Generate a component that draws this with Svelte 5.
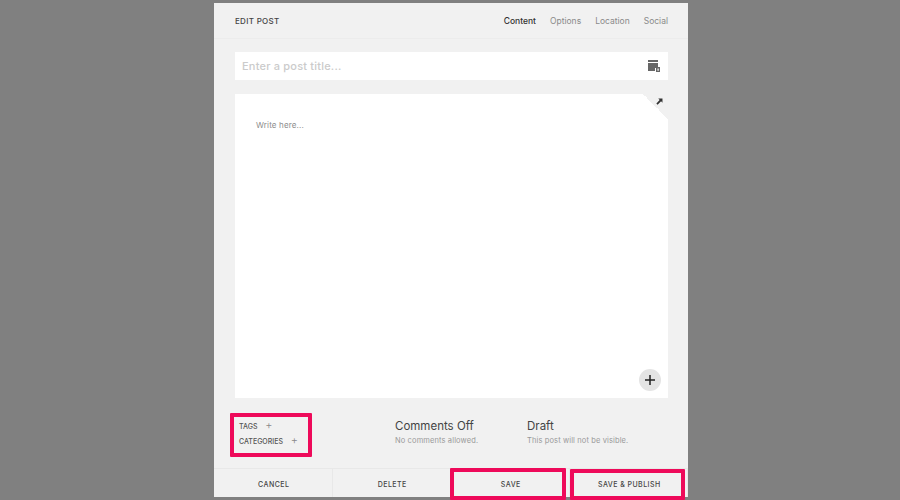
<script>
    let tabs = ['Content', 'Options', 'Location', 'Social']
    let actions = ['CANCEL', 'DELETE', 'SAVE', 'SAVE & PUBLISH']
    let marks = ['tags', 'save', 'publish']
</script>

<div class="page">
    <div class="panel">
        <header>
            <h1>EDIT POST</h1>
            <nav>
                {#each tabs as tab, i}
                    <span class={i === 0 ? 'tab active' : 'tab'}>{tab}</span>
                {/each}
            </nav>
        </header>

        <div class="body">
            <div class="title">
                <span>Enter a post title...</span>
                <svg width="12" height="14" viewBox="0 0 12 14">
                    <path d="M0 1h10v2H0zM0 4h10v5H7v3H0z" fill="#666"/>
                    <path d="M8 8h4v5H8z" fill="#666"/>
                    <path d="M9.5 9.5h1.2v2.2H9.5z" fill="#fff"/>
                </svg>
            </div>

            <div class="editor">
                <div class="corner">
                    <svg width="7" height="7" viewBox="0 0 8 8">
                        <path d="M2.6 0.6H7.4V5.4L5.8 3.8L1.8 7.6L0.4 6.2L4.2 2.2z" fill="#333"/>
                    </svg>
                </div>
                <p>Write here...</p>
                <div class="add">
                    <svg width="10" height="10" viewBox="0 0 10 10">
                        <path d="M5 0v10M0 5h10" stroke="#222" stroke-width="1.5"/>
                    </svg>
                </div>
            </div>

            <div class="meta">
                <div class="labels">
                    <div class="label">TAGS <i>+</i></div>
                    <div class="label">CATEGORIES <i>+</i></div>
                </div>
                <div class="info comments">
                    <h2>Comments Off</h2>
                    <p>No comments allowed.</p>
                </div>
                <div class="info">
                    <h2>Draft</h2>
                    <p>This post will not be visible.</p>
                </div>
            </div>
        </div>

        <footer>
            {#each actions as action}
                <button>{action}</button>
            {/each}
        </footer>
    </div>

    {#each marks as mark}
        <div class={'mark ' + mark}></div>
    {/each}
</div>

<style>
    :global(body) {
        margin: 0;
    }

    .page {
        position: relative;
        width: 900px;
        height: 500px;
        background: #808080;
        overflow: hidden;
        font-family: Inter, "Liberation Sans", sans-serif;
        padding-top: 3px;
        box-sizing: border-box;
    }

    .panel {
        width: 474px;
        height: 494px;
        margin-left: 214px;
        background: #f1f1f1;
        display: flex;
        flex-direction: column;
    }

    header {
        height: 35px;
        flex: none;
        display: flex;
        align-items: center;
        justify-content: space-between;
        padding: 0 20px 0 21px;
        border-bottom: 1px solid #ececec;
    }

    h1 {
        margin: 0;
        font-size: 8px;
        font-weight: 500;
        letter-spacing: 0.3px;
        color: #444;
    }

    nav {
        display: flex;
        gap: 14px;
    }

    .tab {
        font-size: 8.5px;
        color: #8a8a8a;
    }

    .active {
        color: #333;
        font-weight: 500;
    }

    .body {
        flex: 1;
        padding: 13px 20px 0 21px;
        display: flex;
        flex-direction: column;
    }

    .title {
        height: 28px;
        background: #fff;
        display: flex;
        align-items: center;
        justify-content: space-between;
        padding: 0 8px 0 7px;
        font-size: 11px;
        letter-spacing: 0.2px;
        font-weight: 500;
        color: #cbcbcb;
    }

    .editor {
        position: relative;
        height: 304px;
        margin-top: 14px;
        background: #fff;
    }

    .editor p {
        margin: 0;
        padding: 26px 21px;
        font-size: 8px;
        letter-spacing: 0.15px;
        color: #8c8c8c;
    }

    .corner {
        position: absolute;
        top: 0;
        right: 0;
        width: 25px;
        height: 25px;
        background: linear-gradient(to top right, #fff 50%, #f1f1f1 50%);
    }

    .corner svg {
        position: absolute;
        top: 4px;
        right: 5px;
    }

    .add {
        position: absolute;
        right: 7px;
        bottom: 7px;
        width: 22px;
        height: 22px;
        border-radius: 50%;
        background: #e4e4e4;
        display: flex;
        align-items: center;
        justify-content: center;
    }

    .meta {
        display: flex;
        padding-top: 21px;
    }

    .labels {
        width: 160px;
        margin-top: -1px;
        padding-left: 4px;
        box-sizing: border-box;
    }

    .label {
        font-size: 7px;
        font-weight: 500;
        color: #555;
        height: 15px;
        line-height: 15px;
    }

    .label i {
        font-style: normal;
        font-size: 11px;
        font-weight: 300;
        color: #888;
        margin-left: 6px;
    }

    .info h2 {
        margin: 0;
        font-size: 11.5px;
        font-weight: 400;
        color: #444;
    }

    .info p {
        margin: 3px 0 0;
        font-size: 7.5px;
        letter-spacing: 0.12px;
        color: #999;
    }

    .comments {
        width: 132px;
    }

    footer {
        height: 28px;
        flex: none;
        display: flex;
        border-top: 1px solid #e8e8e8;
    }

    button {
        flex: 1;
        border: none;
        border-right: 1px solid #e8e8e8;
        background: none;
        padding: 2px 0 0 2px;
        font-family: inherit;
        font-size: 7px;
        font-weight: 500;
        letter-spacing: 0.45px;
        color: #444;
    }

    .mark {
        position: absolute;
        border: 4px solid #ee0a5a;
        border-radius: 1px;
        box-sizing: border-box;
    }

    .tags {
        left: 230px;
        top: 413px;
        width: 82px;
        height: 44px;
    }

    .save {
        left: 450px;
        top: 468px;
        width: 116px;
        height: 32px;
    }

    .publish {
        left: 570px;
        top: 469px;
        width: 115px;
        height: 31px;
    }
</style>
